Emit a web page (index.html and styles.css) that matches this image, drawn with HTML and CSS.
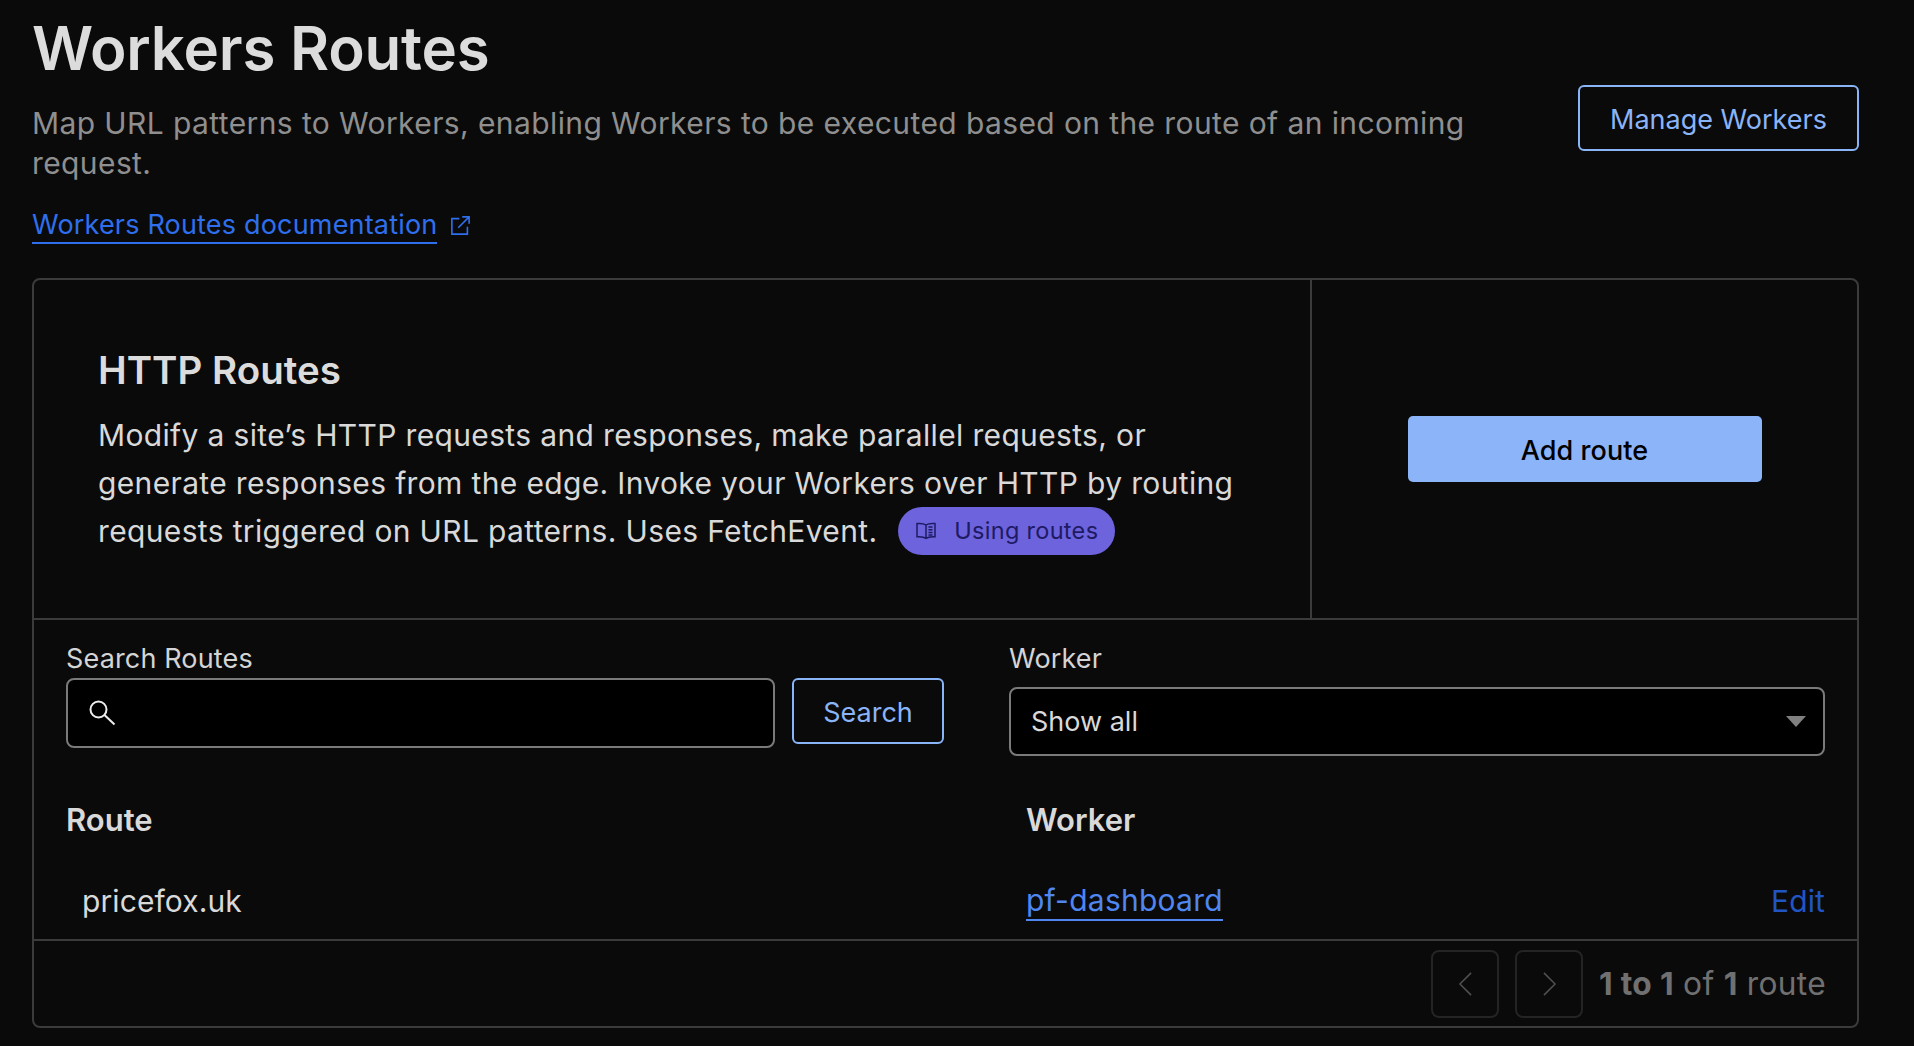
FILE: index.html
```html
<!DOCTYPE html>
<html lang="en">
<head>
<meta charset="utf-8">
<title>Workers Routes</title>
<link rel="stylesheet" href="styles.css">
</head>
<body>
<main class="page">
  <header class="page-head">
    <div class="head-text">
      <h1 class="title">Workers Routes</h1>
      <p class="subtitle">Map URL patterns to Workers, enabling Workers to be executed based on the route of an incoming request.</p>
      <a class="doc-link" href="#"><span class="doc-text">Workers Routes documentation</span>
        <svg class="ext-icon" viewBox="0 0 20 20" fill="none" stroke="currentColor" stroke-width="1.4"><path d="M9 4H2.5v13.5H16V11"/><path d="M8 12 17.5 2.5M11.5 2.5h6v6"/></svg>
      </a>
    </div>
    <a class="btn-outline btn-manage" href="#">Manage Workers</a>
  </header>

  <section class="card">
    <div class="intro">
      <div class="intro-text">
        <h2 class="intro-title">HTTP Routes</h2>
        <p class="intro-desc">Modify a site’s HTTP requests and responses, make parallel requests, or generate responses from the edge. Invoke your Workers over HTTP by routing requests triggered on URL patterns. Uses FetchEvent. <a class="pill" href="#"><svg class="pill-icon" viewBox="0 0 20 18" fill="none" stroke="currentColor" stroke-width="1.5"><path d="M10 3C8 1.6 4 1.4 1 1.6v13.2c3-.2 7 0 9 1.6 2-1.6 6-1.8 9-1.6V1.6C16 1.4 12 1.6 10 3zM10 3v13.4"/><path d="M12.5 5h4M12.5 7.7h4M12.5 10.4h4M12.5 13h4"/></svg>Using routes</a></p>
      </div>
      <div class="intro-action"><a class="btn-primary" href="#">Add route</a></div>
    </div>

    <div class="filters">
      <div class="filter-search">
        <label class="field-label" for="q">Search Routes</label>
        <div class="search-row">
          <div class="search-box">
            <svg class="search-icon" viewBox="0 0 28 28" fill="none" stroke="currentColor" stroke-width="2"><circle cx="10.5" cy="10.5" r="8"/><path d="m16.5 16 10 9.5"/></svg>
            <input class="search-input" id="q" type="text">
          </div>
          <button class="btn-outline btn-search" type="button">Search</button>
        </div>
      </div>
      <div class="filter-worker">
        <span class="field-label">Worker</span>
        <div class="select-box"><span>Show all</span><i class="caret"></i></div>
      </div>
    </div>

    <div class="table">
      <div class="row row-head"><span>Route</span><span>Worker</span><span></span></div>
      <div class="row row-body"><span class="cell-route">pricefox.uk</span><a class="worker-link" href="#">pf-dashboard</a><a class="edit-link" href="#">Edit</a></div>
    </div>

    <footer class="pager">
      <button class="page-btn" type="button" aria-label="Previous"><svg viewBox="0 0 16 28" fill="none" stroke="currentColor" stroke-width="1.6"><path d="M14 2 2 14l12 12"/></svg></button>
      <button class="page-btn" type="button" aria-label="Next"><svg viewBox="0 0 16 28" fill="none" stroke="currentColor" stroke-width="1.6"><path d="m2 2 12 12L2 26"/></svg></button>
      <span class="page-count"><b>1 to 1</b> of <b>1</b> route</span>
    </footer>
  </section>
</main>
</body>
</html>
```

FILE: styles.css
```css
* { box-sizing: border-box; }
html, body { margin: 0; height: 100%; }
body {
  background: #0a0a0a;
  color: #d9d9d9;
  font-family: Inter, "Liberation Sans", sans-serif;
  overflow: hidden;
}
a { text-decoration: none; }
.page { padding: 15px 55px 0 32px; }

.page-head { display: flex; justify-content: space-between; align-items: flex-start; gap: 90px; }
.head-text { flex: 1; }
.title { margin: 0; font-size: 60px; line-height: 66px; font-weight: 600; color: #dcdcdc; letter-spacing: -0.2px; }
.subtitle { margin: 22px 0 0; font-size: 30px; line-height: 40px; color: #8f8f8f; letter-spacing: 0.4px; }
.doc-link { display: inline-flex; align-items: center; gap: 12px; margin-top: 24px; color: #2f6fed; font-size: 27px; line-height: 35px; letter-spacing: 0.18px; }
.doc-text { border-bottom: 2px solid #2f6fed; }
.ext-icon { width: 23px; height: 23px; }

.btn-outline {
  display: inline-flex; align-items: center; justify-content: center;
  padding-top: 2px;
  background: transparent; color: #8ab4f8;
  border: 2px solid #8ab4f8; border-radius: 6px;
  font-family: inherit; font-size: 27px;
}
.btn-manage { flex: none; width: 281px; height: 66px; margin-top: 70px; }

.card { margin-top: 34px; border: 2px solid #3b3b3b; border-radius: 8px; height: 750px; display: flex; flex-direction: column; }
.intro { display: flex; height: 340px; border-bottom: 2px solid #3b3b3b; }
.intro-text { width: 1278px; padding: 68px 60px 0 64px; border-right: 2px solid #3b3b3b; }
.intro-title { margin: 0; font-size: 38.5px; line-height: 44px; font-weight: 600; color: #dcdcdc; }
.intro-desc { margin: 19px 0 0; font-size: 30px; line-height: 48px; color: #d9d9d9; letter-spacing: 0.35px; }
.pill {
  display: inline-flex; align-items: center; height: 48px; padding: 0 17px 0 18px; margin-left: 12px;
  background: #6c63dd; color: #1e1a63; border-radius: 24px;
  font-size: 23.5px; line-height: 48px; vertical-align: top; letter-spacing: 0.3px;
}
.pill-icon { width: 20px; height: 18px; margin-right: 18px; }
.intro-action { flex: 1; display: flex; align-items: center; justify-content: center; }
.btn-primary { display: flex; align-items: center; justify-content: center; width: 354px; height: 66px; padding-top: 2px; background: #8cb4f8; color: #000; border-radius: 5px; font-size: 27px; font-weight: 500; letter-spacing: 0.1px; }

.filters { display: flex; padding: 20px 32px 0 32px; }
.filter-search { width: 878px; margin-right: 65px; }
.filter-worker { flex: 1; }
.field-label { display: block; font-size: 27px; line-height: 38px; color: #d4d4d4; letter-spacing: 0.15px; }
.search-row { display: flex; gap: 17px; align-items: flex-start; }
.search-box { flex: 1; height: 70px; display: flex; align-items: center; padding-left: 20px; background: #000; border: 2px solid #7a7a7a; border-radius: 8px; color: #eee; }
.search-icon { width: 28px; height: 28px; flex: none; }
.search-input { flex: 1; min-width: 0; background: transparent; border: 0; outline: 0; color: #eee; font: inherit; }
.btn-search { flex: none; width: 152px; height: 66px; padding-top: 3px; cursor: pointer; }
.select-box { display: flex; align-items: center; justify-content: space-between; height: 69px; margin-top: 9px; padding: 0 17px 0 20px; background: #000; border: 2px solid #7a7a7a; border-radius: 8px; font-size: 27px; color: #d9d9d9; }
.caret { width: 0; height: 0; border-left: 10px solid transparent; border-right: 10px solid transparent; border-top: 11px solid #808080; }

.table { padding: 0 32px 0 32px; flex: 1; }
.row { display: grid; grid-template-columns: 960px 1fr auto; align-items: center; }
.row-head { margin-top: 41px; height: 44px; font-size: 31px; font-weight: 600; color: #d9d9d9; }
.row-body { margin-top: 36px; height: 48px; font-size: 30px; }
.cell-route { padding-left: 16px; color: #d9d9d9; letter-spacing: 0.1px; }
.worker-link { justify-self: start; color: #4f86f0; border-bottom: 2px solid #4f86f0; line-height: 38px; letter-spacing: 0.25px; }
.edit-link { color: #2255c4; letter-spacing: 0.1px; }

.pager { display: flex; align-items: center; justify-content: flex-end; height: 87px; padding: 0 31px 0 0; border-top: 2px solid #3b3b3b; }
.page-btn { width: 68px; height: 68px; margin-right: 16px; padding: 0; display: flex; align-items: center; justify-content: center; background: transparent; border: 2px solid #242424; border-radius: 8px; color: #505050; }
.page-btn svg { width: 15px; height: 26px; }
.page-count { font-size: 31.7px; color: #707070; letter-spacing: 0.3px; }
.page-count b { font-weight: 700; }
```
